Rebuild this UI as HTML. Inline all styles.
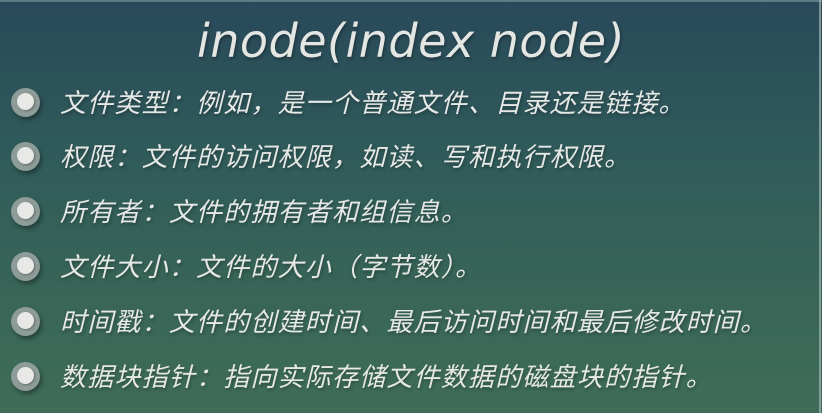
<!DOCTYPE html>
<html><head><meta charset="utf-8"><style>
html,body{margin:0;padding:0;}
body{width:822px;height:413px;overflow:hidden;position:relative;
background:linear-gradient(180deg,#29495a 0%,#2f5a5a 35%,#386557 70%,#3f6d58 100%);
font-family:"Liberation Sans","Noto Sans CJK SC",sans-serif;color:#e6e8e6;}
.edge{position:absolute;right:1px;top:0;width:2px;height:413px;background:#9fb3b0;opacity:.7}
.top{position:absolute;left:0;top:0;width:822px;height:2px;background:#5d7a85}
h1{position:absolute;left:0;width:822px;top:14px;margin:0;text-align:center;font-family:"DejaVu Sans","Liberation Sans",sans-serif;font-weight:normal;font-style:italic;font-size:46px;color:#e4e6e4;letter-spacing:0.5px;text-shadow:1px 2px 3px rgba(0,0,0,.35)}
.it{position:absolute;left:60px;font-size:26px;line-height:30px;font-style:italic;white-space:nowrap;letter-spacing:1.2px;text-shadow:1px 2px 3px rgba(0,0,0,.3)}
.b{position:absolute;left:11px;width:29px;height:29px;border-radius:50%;background:#8d9c98;box-shadow:2px 3px 4px rgba(0,0,0,.35)}
.b::after{content:"";position:absolute;left:6px;top:5px;width:17px;height:17px;border-radius:50%;background:#e8e8e6;box-shadow:1px 1px 2px rgba(0,0,0,.3)}
</style></head><body>
<div class="top"></div><div class="edge"></div>
<h1>inode(index node)</h1>
<div class="b" style="top:88px"></div><div class="it" style="top:88px">文件类型：例如，是一个普通文件、目录还是链接。</div>
<div class="b" style="top:142px"></div><div class="it" style="top:142px">权限：文件的访问权限，如读、写和执行权限。</div>
<div class="b" style="top:197px"></div><div class="it" style="top:197px">所有者：文件的拥有者和组信息。</div>
<div class="b" style="top:252px"></div><div class="it" style="top:252px">文件大小：文件的大小（字节数）。</div>
<div class="b" style="top:307px"></div><div class="it" style="top:307px">时间戳：文件的创建时间、最后访问时间和最后修改时间。</div>
<div class="b" style="top:362px"></div><div class="it" style="top:362px">数据块指针：指向实际存储文件数据的磁盘块的指针。</div>
</body></html>
